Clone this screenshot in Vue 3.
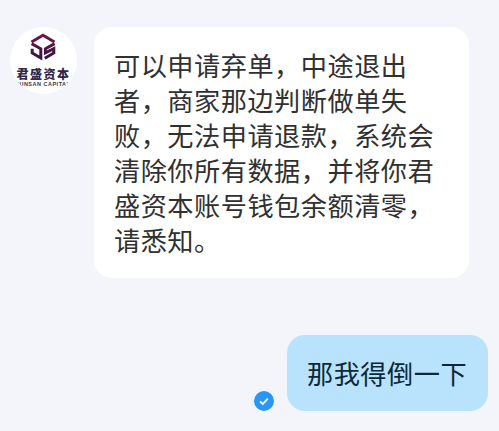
<template>
  <main class="chat">
    <div class="row incoming">
      <div class="avatar">
        <svg class="logo" viewBox="0 0 26 28" width="26" height="28">
          <defs>
            <linearGradient id="brand" x1="0" y1="0" x2="0" y2="28" gradientUnits="userSpaceOnUse">
              <stop offset="0" stop-color="#7a1548" />
              <stop offset="1" stop-color="#29163f" />
            </linearGradient>
          </defs>
          <g fill="none" stroke="url(#brand)" stroke-width="3">
            <path d="M1.5 9L13 2.2 24.500 9" />
            <path d="M1.600 10.600l9.200 5.200v9.200L2.200 20v-4.200" />
            <path d="M24.600 10.600l-9.200 5.200v4l8.400-4.200V20l-9 5.200" />
          </g>
        </svg>
        <span class="brand-cn">君盛资本</span>
        <span class="brand-en">'UNSAN CAPITA'</span>
      </div>
      <div class="bubble received">
        <div v-for="line in lines" :key="line">{{ line }}</div>
      </div>
    </div>

    <div class="row outgoing">
      <svg class="status" viewBox="0 0 20 20" width="20" height="20">
        <circle cx="10" cy="10" r="10" fill="#2897f8" />
        <path d="M6 10.300l2.800 2.700L13.800 7.600" fill="none" stroke="#fff" stroke-width="1.8" />
      </svg>
      <div class="bubble sent">{{ reply }}</div>
    </div>
  </main>
</template>

<script setup>
const lines = [
  '可以申请弃单，中途退出',
  '者，商家那边判断做单失',
  '败，无法申请退款，系统会',
  '清除你所有数据，并将你君',
  '盛资本账号钱包余额清零，',
  '请悉知。'
]
const reply = '那我得倒一下'
</script>

<style>
body {
  background: #f3f5fa;
}
</style>

<style scoped>
.chat {
  box-sizing: border-box;
  height: 431px;
  padding: 27px 11px 0 10px;
  background: #f3f5fa;
  font-family: "Liberation Sans", "Noto Sans CJK SC", sans-serif;
  overflow: hidden;
}

.row {
  display: flex;
}

.incoming {
  gap: 17px;
}

.avatar {
  box-sizing: border-box;
  display: flex;
  flex: none;
  flex-direction: column;
  align-items: center;
  width: 67px;
  height: 67px;
  padding: 6px 1px 0 0;
  border-radius: 50%;
  background: #fff;
  overflow: hidden;
}

.logo {
  flex: none;
}

.brand-cn {
  margin-top: 8px;
  padding-left: 1px;
  color: #30274a;
  font-size: 12px;
  font-weight: 900;
  line-height: 12px;
  letter-spacing: 1.5px;
  white-space: nowrap;
}

.brand-en {
  color: #3b3448;
  font-size: 5.5px;
  font-weight: 700;
  line-height: 6px;
  letter-spacing: 0.5px;
  white-space: nowrap;
}

.bubble {
  box-sizing: border-box;
  border-radius: 18px;
  font-size: 26.2px;
  line-height: 35.1px;
  letter-spacing: 0.5px;
  white-space: nowrap;
}

.received {
  width: 375px;
  height: 251px;
  padding: 23px 20px 0;
  background: #fff;
  color: #303030;
}

.outgoing {
  align-items: flex-end;
  justify-content: flex-end;
  gap: 13px;
  margin-top: 57px;
}

.sent {
  width: 201px;
  height: 76px;
  padding: 23px 20px 0;
  background: #b9e2fd;
  color: #0d2939;
}
</style>
